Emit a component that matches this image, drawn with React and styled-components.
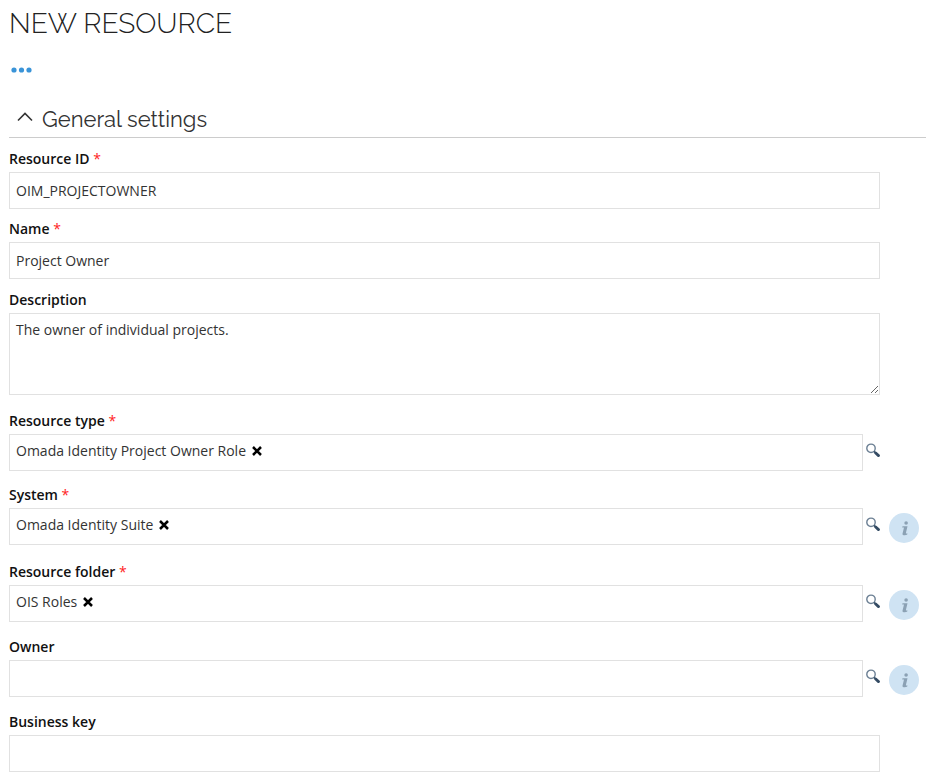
import React, { useState } from "react";
import styled, { createGlobalStyle } from "styled-components";

const GlobalStyle = createGlobalStyle`
  *, *::before, *::after { box-sizing: border-box; }
  body {
    margin: 0;
    background: #fff;
    color: #333;
    font: 14px/20px "Open Sans", "Noto Sans", sans-serif;
  }
  button, input, textarea { font: inherit; color: inherit; }
`;

const Page = styled.main`
  padding: 6px 11px 8px 9px;
`;

const Title = styled.h1`
  margin: 0;
  font: 300 28px/36px Raleway, Lato, sans-serif;
  text-transform: uppercase;
  color: #222;
`;

const IconButton = styled.button`
  display: flex;
  align-items: center;
  justify-content: center;
  flex: none;
  padding: 0;
  border: 0;
  background: none;
  cursor: pointer;
`;

const MoreButton = styled(IconButton)`
  width: 25px;
  height: 20px;
  margin-top: 18px;
`;

const SectionHeader = styled.h2`
  margin: 21px 0 0;
  padding-bottom: 1px;
  border-bottom: 1px solid #ccc;
  font: 400 22px/36px Raleway, Lato, sans-serif;
  color: #333;
`;

const SectionToggle = styled(IconButton)`
  gap: 9px;
  height: 35px;
  padding-left: 8px;
`;

const Fields = styled.form`
  display: flex;
  flex-direction: column;
  padding-top: 11px;
`;

const Field = styled.div`
  margin-bottom: ${(p) => p.$gap}px;
`;

const Label = styled.label`
  display: block;
  width: fit-content;
  margin-bottom: 3px;
  font-weight: 600;
  color: #111;
`;

const Required = styled.span`
  font-weight: 400;
  color: #f22;
`;

const Row = styled.div`
  display: grid;
  grid-template-columns: minmax(0, 1fr) 46px;
`;

const TextInput = styled.input`
  width: 100%;
  height: 37px;
  padding: 0 6px;
  border: 1px solid #e1e1e1;
  border-radius: 0;
  background: #fff;
`;

const TextArea = styled.textarea`
  display: block;
  width: 100%;
  height: 82px;
  padding: 6px;
  border: 1px solid #e1e1e1;
  border-radius: 0;
  resize: vertical;
`;

const Lookup = styled.div`
  display: flex;
  align-items: flex-start;
`;

const LookupBox = styled.div`
  display: flex;
  align-items: center;
  gap: 6px;
  flex: 1;
  min-width: 0;
  height: 37px;
  padding: 0 6px 4px;
  border: 1px solid #e1e1e1;
`;

const LookupInput = styled.input`
  flex: 1;
  min-width: 0;
  padding: 0;
  border: 0;
  outline: 0;
  background: none;
`;

const SearchButton = styled(IconButton)`
  width: 17px;
  height: 32px;
  justify-content: flex-end;
`;

const InfoButton = styled(IconButton)`
  width: 30px;
  height: 30px;
  margin: 5px 0 0 9px;
  padding-left: 2px;
  border-radius: 50%;
  background: #cfe3f3;
`;

const Dots = () => (
  <svg width="21" height="6" viewBox="0 0 21 6" fill="#3a94d8" aria-hidden="true">
    <circle cx="3" cy="3" r="2.6" />
    <circle cx="10.5" cy="3" r="2.6" />
    <circle cx="18" cy="3" r="2.6" />
  </svg>
);

const Chevron = () => (
  <svg width="16" height="14" viewBox="0 0 16 14" fill="none" stroke="#333" strokeWidth="1.6" aria-hidden="true">
    <path d="M1 8.5 8 1.5l7 7" />
  </svg>
);

const Cross = () => (
  <svg width="10" height="10" viewBox="0 0 10 10" aria-hidden="true">
    <path d="M1 1 9 9M9 1 1 9" stroke="#000" strokeWidth="2.5" />
  </svg>
);

const Magnifier = () => (
  <svg width="14" height="15" viewBox="0 0 14 15" fill="none" aria-hidden="true">
    <circle cx="5" cy="5.3" r="4.2" stroke="#6b7f93" strokeWidth="1.4" />
    <path d="m8 8.4 2 2" stroke="#3f5870" strokeWidth="1.6" />
    <path d="m9.7 10 2.8 2.6" stroke="#344b63" strokeWidth="2.8" strokeLinecap="round" />
  </svg>
);

const InfoGlyph = () => (
  <svg width="8" height="15" viewBox="0 0 8 15" fill="#8ba1b4" aria-hidden="true">
    <circle cx="5.1" cy="2" r="1.8" />
    <path d="M1.5 5.2h5l-1.6 6.8c-.1.6.2.7 1.4.3v1.3c-1.4.8-5.2 1.1-4.8-.9l1.5-6.1H1.2z" />
  </svg>
);

const FieldLabel = ({ id, required, children }) => (
  <Label htmlFor={id}>
    {children}
    {required && <Required> *</Required>}
  </Label>
);

function TextField({ id, label, value = "", required, gap, multiline }) {
  const Control = multiline ? TextArea : TextInput;
  return (
    <Field $gap={gap}>
      <FieldLabel id={id} required={required}>{label}</FieldLabel>
      <Row>
        <Control id={id} defaultValue={value} required={required} />
      </Row>
    </Field>
  );
}

function LookupField({ id, label, value, required, info, gap }) {
  const [selected, setSelected] = useState(value);
  return (
    <Field $gap={gap}>
      <FieldLabel id={id} required={required}>{label}</FieldLabel>
      <Row>
        <Lookup>
          <LookupBox>
            {selected && <span>{selected}</span>}
            {selected && (
              <IconButton type="button" aria-label={`Remove ${selected}`} onClick={() => setSelected("")}>
                <Cross />
              </IconButton>
            )}
            <LookupInput id={id} />
          </LookupBox>
          <SearchButton type="button" aria-label={`Search ${label}`}>
            <Magnifier />
          </SearchButton>
        </Lookup>
        {info && (
          <InfoButton type="button" aria-label={`About ${label}`}>
            <InfoGlyph />
          </InfoButton>
        )}
      </Row>
    </Field>
  );
}

export default function App() {
  const [open, setOpen] = useState(true);
  return (
    <>
      <GlobalStyle />
      <Page>
        <Title>New resource</Title>
        <MoreButton type="button" aria-label="More actions">
          <Dots />
        </MoreButton>
        <SectionHeader>
          <SectionToggle type="button" aria-expanded={open} onClick={() => setOpen(!open)}>
            <Chevron />
            General settings
          </SectionToggle>
        </SectionHeader>
        {open && (
          <Fields>
            <TextField id="resource-id" label="Resource ID" value="OIM_PROJECTOWNER" required gap={10} />
            <TextField id="name" label="Name" value="Project Owner" required gap={11} />
            <TextField id="description" label="Description" value="The owner of individual projects." multiline gap={16} />
            <LookupField id="type" label="Resource type" value="Omada Identity Project Owner Role" required gap={14} />
            <LookupField id="system" label="System" value="Omada Identity Suite" required info gap={17} />
            <LookupField id="folder" label="Resource folder" value="OIS Roles" required info gap={15} />
            <LookupField id="owner" label="Owner" info gap={15} />
            <TextField id="business-key" label="Business key" gap={0} />
          </Fields>
        )}
      </Page>
    </>
  );
}
